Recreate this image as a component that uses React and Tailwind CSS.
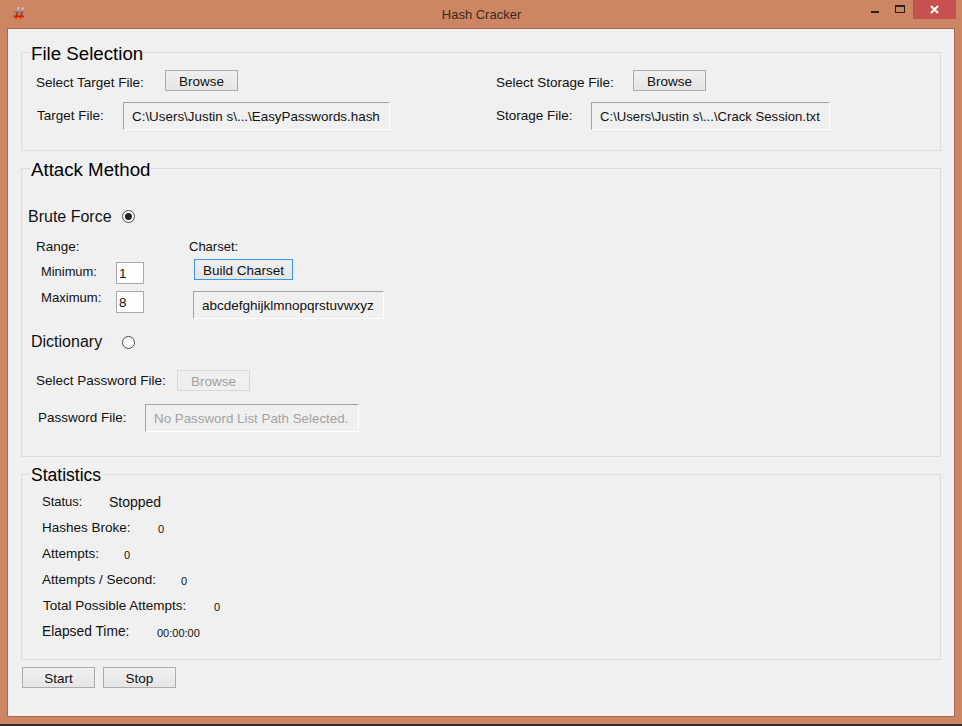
import React from "react";

function WinButton({ children, className = "", disabled }) {
  return (
    <button
      disabled={disabled}
      className={`h-[21px] w-[73px] shrink-0 border pt-[1px] text-[13.5px] leading-[19px] ${
        disabled
          ? "border-[#d9d9d9] bg-[#efefef] text-[#a0a0a0]"
          : "border-[#acacac] bg-gradient-to-b from-[#f0f0f0] to-[#e5e5e5] text-[#111]"
      } ${className}`}
    >
      {children}
    </button>
  );
}

function PathBox({ children, className = "", disabled }) {
  return (
    <div
      className={`h-[28px] border-t border-l border-t-[#a3a3a3] border-l-[#a3a3a3] border-r border-b border-r-white border-b-white bg-[#f0f0f0] pl-2 text-[13.5px] leading-[28px] whitespace-nowrap ${
        disabled ? "text-[#a3a3a3]" : "text-[#111]"
      } ${className}`}
    >
      {children}
    </div>
  );
}

function Group({ title, size = "text-[18.7px]", className = "", children }) {
  return (
    <fieldset className={`border border-[#dcdcdc] ${className}`}>
      <legend className={`ml-[8px] px-[1px] pt-[2px] leading-[21px] text-black ${size}`}>{title}</legend>
      {children}
    </fieldset>
  );
}

function Radio({ checked }) {
  return (
    <span className="flex h-[13px] w-[13px] items-center justify-center rounded-full border border-[#4a4a4a] bg-white">
      {checked && <span className="h-[7px] w-[7px] rounded-full bg-[#222]" />}
    </span>
  );
}

function Stat({ label, value, valueLeft, small }) {
  return (
    <div className="flex h-[26px] items-center pl-[20px]">
      <span className={`text-[13.5px] text-[#111] ${valueLeft}`}>{label}</span>
      <span className={small ? "text-[11px] mt-[3px] text-[#111]" : "text-[14px] text-[#111]"}>{value}</span>
    </div>
  );
}

function HashIcon() {
  return (
    <svg width="12" height="14" viewBox="0 0 12 14" className="absolute left-[13px] top-[7px]">
      <defs>
        <linearGradient id="hash" gradientUnits="userSpaceOnUse" x1="0" y1="0" x2="0" y2="14">
          <stop offset="0" stopColor="#f8f0ec" />
          <stop offset="0.45" stopColor="#7a4a48" />
          <stop offset="0.65" stopColor="#d01810" />
          <stop offset="1" stopColor="#f49020" />
        </linearGradient>
      </defs>
      <path
        d="M5.5 0.5 L2.5 13.5 M10 0.5 L7 13.5 M1 4.5 H11.5 M0.5 9.5 H11"
        stroke="url(#hash)"
        strokeWidth="1.8"
        fill="none"
      />
    </svg>
  );
}

export default function App() {
  return (
    <div
      className="flex h-[726px] w-[962px] flex-col overflow-hidden bg-[#cc8663]"
      style={{ fontFamily: '"Liberation Sans", Arial, sans-serif' }}
    >
      {/* title bar */}
      <div className="relative flex h-[28px] shrink-0 items-center justify-center text-[13px] text-[#3a2a20]">
        <HashIcon />
        <span className="mt-[1px] ml-[1px]">Hash Cracker</span>
        <div className="absolute top-0 right-[6px] flex items-start">
          <span className="mt-[11px] mr-[16px] h-[2px] w-[8px] bg-[#222]" />
          <span className="mt-[5px] mr-[8px] h-[8px] w-[10px] border border-t-2 border-[#222]" />
          <span className="flex h-[19px] w-[43px] items-center justify-center bg-[#c75050]">
            <svg width="9" height="9" viewBox="0 0 9 9">
              <path d="M1 1 L8 8 M8 1 L1 8" stroke="#fff" strokeWidth="2" />
            </svg>
          </span>
        </div>
      </div>

      {/* client area */}
      <div className="mx-[7px] flex h-[689px] flex-col border border-[#a8684a] bg-[#f0f0f0] pl-[13px] pr-[13px]">
        <Group title="File Selection" className="mt-[12px] h-[110px]">
          <div className="grid grid-cols-[474px_1fr]">
            <div>
              <div className="mt-[6px] flex items-center">
                <span className="ml-[14px] w-[129px] pt-[3px] text-[13.5px] leading-[15px] text-[#111]">Select Target File:</span>
                <WinButton>Browse</WinButton>
              </div>
              <div className="mt-[11px] flex items-center">
                <span className="ml-[15px] w-[86px] text-[13.5px] text-[#111]">Target File:</span>
                <PathBox className="w-[267px] !text-[13.4px]">C:\Users\Justin s\...\EasyPasswords.hash</PathBox>
              </div>
            </div>
            <div>
              <div className="mt-[6px] flex items-center">
                <span className="w-[137px] pt-[3px] text-[13.5px] leading-[15px] text-[#111]">Select Storage File:</span>
                <WinButton>Browse</WinButton>
              </div>
              <div className="mt-[11px] flex items-center">
                <span className="w-[95px] text-[13.5px] text-[#111]">Storage File:</span>
                <PathBox className="w-[239px] !text-[13.15px]">C:\Users\Justin s\...\Crack Session.txt</PathBox>
              </div>
            </div>
          </div>
        </Group>

        <Group title="Attack Method" className="mt-[6px] h-[300px]">
          <div className="mt-[26px] flex h-[20px] items-center pl-[6px]">
            <span className="mt-[2px] w-[94px] text-[16px] text-[#111]">Brute Force</span>
            <Radio checked />
          </div>
          <div className="mt-[12px] flex">
            <div className="w-[167px] pl-[14px] text-[13.5px] text-[#111]">
              <div className="h-[18px] leading-[18px]">Range:</div>
              <div className="mt-[6px] flex items-center pl-[5px]">
                <span className="mb-[2px] w-[75px] text-[12.9px]">Minimum:</span>
                <div className="h-[22px] w-[28px] border border-[#a9a9a9] bg-white pl-[2px] leading-[22px]">1</div>
              </div>
              <div className="mt-[4px] flex items-center pl-[5px]">
                <span className="mb-[8px] w-[75px] text-[13.1px]">Maximum:</span>
                <div className="h-[22px] w-[28px] border border-[#a9a9a9] bg-white pl-[2px] leading-[22px]">8</div>
              </div>
            </div>
            <div className="text-[13.5px] text-[#111]">
              <div className="h-[18px] text-[13px] leading-[18px]">Charset:</div>
              <WinButton className="mt-[3px] ml-[5px] w-[99px] !border-[#3d96e8]">Build Charset</WinButton>
              <PathBox className="mt-[10px] ml-[4px] w-[191px]">abcdefghijklmnopqrstuvwxyz</PathBox>
            </div>
          </div>
          <div className="mt-[13px] flex h-[20px] items-center pl-[9px]">
            <span className="w-[91px] text-[16px] text-[#111]">Dictionary</span>
            <Radio />
          </div>
          <div className="mt-[18px] flex items-center pl-[14px]">
            <span className="w-[141px] text-[13.5px] text-[#111]">Select Password File:</span>
            <WinButton disabled>Browse</WinButton>
          </div>
          <div className="mt-[13px] flex items-center pl-[16px]">
            <span className="w-[107px] text-[13.5px] text-[#111]">Password File:</span>
            <PathBox disabled className="w-[214px] !text-[13.35px]">No Password List Path Selected.</PathBox>
          </div>
        </Group>

        <Group title="Statistics" size="text-[17.5px]" className="mt-[6px] h-[197px]">
          <div className="mt-[3px]">
            <Stat label="Status:" value="Stopped" valueLeft="w-[67px] !text-[13px]" />
            <Stat label="Hashes Broke:" value="0" valueLeft="w-[116px]" small />
            <Stat label="Attempts:" value="0" valueLeft="w-[82px]" small />
            <Stat label="Attempts / Second:" value="0" valueLeft="w-[139px]" small />
            <Stat label="Total Possible Attempts:" value="0" valueLeft="ml-[1px] w-[171px]" small />
            <Stat label="Elapsed Time:" value="00:00:00" valueLeft="w-[115px] !text-[13.8px]" small />
          </div>
        </Group>

        <div className="mt-[7px] ml-[1px] flex gap-[8px]">
          <WinButton>Start</WinButton>
          <WinButton>Stop</WinButton>
        </div>
      </div>

      {/* bottom edge of the window behind */}
      <div className="mt-auto h-[2px] shrink-0 bg-[#2e2e2e]" />
    </div>
  );
}
